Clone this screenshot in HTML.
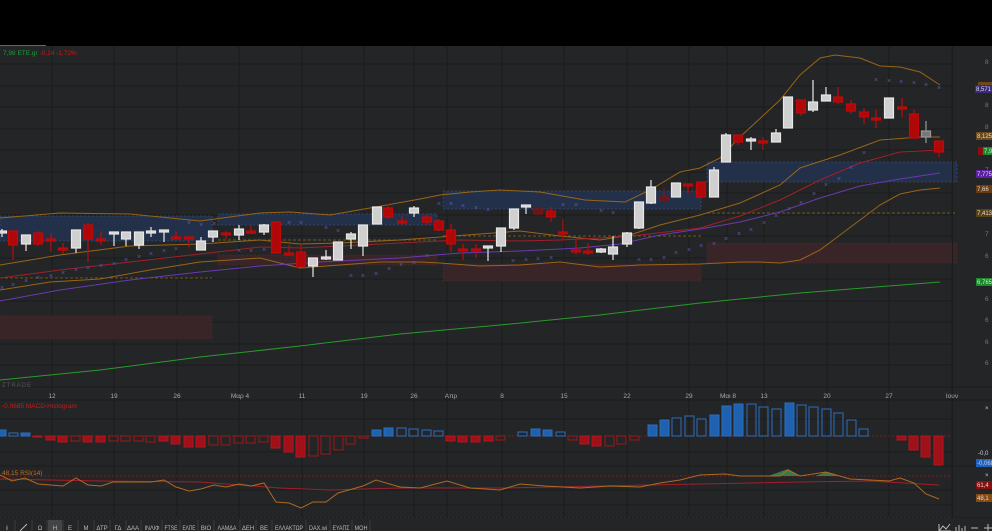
<!DOCTYPE html>
<html><head><meta charset="utf-8"><style>
html,body{margin:0;padding:0;background:#000;width:992px;height:531px;overflow:hidden;font-family:"Liberation Sans","Noto Sans CJK SC",sans-serif}
svg{display:block}
</style></head><body>
<svg width="992" height="531" viewBox="0 0 992 531" xmlns="http://www.w3.org/2000/svg" font-family="Liberation Sans, sans-serif">
<rect x="0" y="0" width="992" height="46" fill="#000"/>
<rect x="0" y="45" width="46" height="1" fill="#666"/>
<rect x="0" y="46" width="992" height="485" fill="#232526"/>
<!-- grid -->
<g stroke="#1a1c1d" stroke-width="1">
<path d="M52 46V518M114 46V518M177 46V518M239 46V518M302 46V518M364 46V518M414 46V518M447 46V518M502 46V518M564 46V518M627 46V518M689 46V518M727 46V518M764 46V518M827 46V518M889 46V518M952 46V518"/>
<path d="M0 64H952M0 86H952M0 107H952M0 129H952M0 150H952M0 172H952M0 193H952M0 215H952M0 236H952M0 258H952M0 279H952M0 301H952M0 322H952M0 344H952M0 365H952M0 387H992M0 400H992M0 419H952M0 452H952M0 466H992M0 490H952M0 505H952M0 518H992"/>
</g>
<text x="3" y="55" font-size="6.5" fill="#1f9a3a">7,98 ETE.gr <tspan fill="#d01818">-0,14 -1,72%</tspan></text>
<!-- zones -->
<g stroke-dasharray="2,2" stroke-width="0.8">
<rect x="0" y="216" width="212" height="25" fill="#23304a" stroke="#3a4a6a"/>
<rect x="218" y="214" width="219" height="11" fill="#23304a" stroke="#3a4a6a"/>
<rect x="443" y="191" width="258" height="18" fill="#23304a" stroke="#3a4a6a"/>
<rect x="707" y="162" width="250" height="20" fill="#23304a" stroke="#3a4a6a"/>
<rect x="0" y="316" width="212" height="23" fill="#392527" stroke="#4a2a2a"/>
<rect x="218" y="255" width="219" height="10" fill="#392527" stroke="#4a2a2a"/>
<rect x="443" y="264" width="258" height="17" fill="#392527" stroke="#4a2a2a"/>
<rect x="707" y="243" width="250" height="20" fill="#392527" stroke="#4a2a2a"/>
</g>
<g stroke="#8a6a1a" stroke-dasharray="3,2" stroke-width="0.8">
<path d="M0 278H212M218 240H437M443 236H701M707 213H957"/>
</g>
<!-- lines -->
<g fill="none" stroke-width="1">
<polyline stroke="#9a6418" points="0,218 60,213 130,214 200,221 230,217 260,213 290,212 330,215 370,208 420,199 440,195 470,192 500,190 540,192 585,200 625,202 650,190 680,172 700,168 720,158 740,137 780,100 800,75 820,58 835,55 860,58 880,66 900,67 920,72 940,85"/>
<polyline stroke="#9a6418" points="0,290 50,282 100,279 150,270 200,262 230,260 260,258 300,268 340,265 380,262 420,262 440,263 480,266 520,265 560,262 600,267 640,265 700,264 740,262 760,262 780,263 800,260 820,250 840,235 860,220 880,205 900,194 920,190 940,188"/>
<polyline stroke="#9a6418" points="0,265 60,255 130,246 200,244 260,240 300,244 340,243 400,240 440,237 480,234 520,231 560,236 600,240 630,235 660,225 700,215 740,203 780,185 800,168 840,155 880,140 920,137 940,137"/>
<polyline stroke="#a0202a" points="0,278 60,270 130,262 200,254 260,247 300,248 360,245 420,242 460,240 520,241 560,240 600,238 640,235 700,228 740,216 780,200 820,180 860,163 900,152 940,150"/>
<polyline stroke="#6a3ab0" points="0,301 60,290 130,280 200,272 260,266 320,262 400,258 460,253 520,251 580,248 620,244 660,235 700,229 740,222 780,212 820,198 860,186 900,179 940,173"/>
<polyline stroke="#2a9a2a" points="0,380 100,370 200,357 300,346 400,334 500,325 600,315 700,303 800,293 940,282"/>
</g>
<!-- SAR -->
<g font-size="7" fill="#5a5ab0" text-anchor="middle">
<text x="2" y="290">×</text><text x="13" y="287">×</text><text x="26" y="283">×</text><text x="38" y="280">×</text><text x="51" y="278">×</text><text x="63" y="275">×</text><text x="76" y="272">×</text><text x="88" y="270">×</text><text x="101" y="268">×</text><text x="114" y="266">×</text><text x="126" y="262">×</text><text x="139" y="259">×</text><text x="151" y="256">×</text><text x="164" y="253">×</text><text x="176" y="251">×</text><text x="189" y="225">×</text><text x="201" y="227">×</text><text x="214" y="226">×</text><text x="239" y="253">×</text><text x="251" y="253">×</text><text x="264" y="252">×</text><text x="276" y="225">×</text><text x="289" y="225">×</text><text x="301" y="225">×</text><text x="326" y="230">×</text><text x="338" y="233">×</text><text x="351" y="278">×</text><text x="363" y="278">×</text><text x="376" y="276">×</text><text x="389" y="271">×</text><text x="401" y="267">×</text><text x="414" y="265">×</text><text x="427" y="258">×</text><text x="439" y="206">×</text><text x="451" y="206">×</text><text x="463" y="208">×</text><text x="476" y="210">×</text><text x="488" y="212">×</text><text x="513" y="263">×</text><text x="526" y="262">×</text><text x="538" y="261">×</text><text x="551" y="260">×</text><text x="563" y="207">×</text><text x="576" y="207">×</text><text x="601" y="213">×</text><text x="613" y="215">×</text><text x="639" y="262">×</text><text x="651" y="262">×</text><text x="664" y="260">×</text><text x="676" y="255">×</text><text x="689" y="252">×</text><text x="701" y="248">×</text><text x="714" y="246">×</text><text x="726" y="241">×</text><text x="739" y="236">×</text><text x="751" y="232">×</text><text x="764" y="225">×</text><text x="776" y="218">×</text><text x="789" y="211">×</text><text x="801" y="205">×</text><text x="814" y="196">×</text><text x="826" y="187">×</text><text x="839" y="181">×</text><text x="851" y="170">×</text><text x="864" y="155">×</text><text x="876" y="82">×</text><text x="889" y="83">×</text><text x="901" y="84">×</text><text x="914" y="85">×</text><text x="926" y="87">×</text><text x="939" y="90">×</text>
</g>
<!-- red candles -->
<g fill="#b00808" stroke="#c00a0a" stroke-width="1.2">
<path fill="none" d="M13 231V260M38 231V246M51 233V252M63 243V254M88 223V262M101 231V245M176 231V239M189 236V247M226 231V239M251 225V234M276 222V253M289 245V256M301 243V267M388 204V219M402 216V225M427 215V225M439 219V231M451 224V252M463 244V260M476 244V258M551 207V222M563 219V241M576 240V254M588 243V255M688 184V193M701 182V197M738 135V145M763 137V150M801 100V116M838 87V104M851 100V114M864 108V124M876 110V128M902 98V117M914 110V138M939 141V157"/>
<rect x="8.5" y="231" width="9" height="14"/><rect x="33.5" y="233" width="9" height="11"/><rect x="46.5" y="239" width="9" height="2"/><rect x="58.5" y="248" width="9" height="2"/><rect x="83.5" y="225" width="9" height="14"/><rect x="96.5" y="239" width="9" height="2"/><rect x="171.5" y="237" width="9" height="2"/><rect x="184.5" y="237" width="9" height="2"/><rect x="221.5" y="233" width="9" height="2"/><rect x="246.5" y="231" width="9" height="2"/><rect x="271.5" y="222" width="9" height="31"/><rect x="284.5" y="253" width="9" height="2"/><rect x="296.5" y="252" width="9" height="15"/><rect x="383.5" y="208" width="9" height="9"/><rect x="397.5" y="221" width="9" height="2"/><rect x="422.5" y="217" width="9" height="5"/><rect x="434.5" y="221" width="9" height="9"/><rect x="446.5" y="230" width="9" height="14"/><rect x="458.5" y="249" width="9" height="2"/><rect x="471.5" y="249" width="9" height="2"/><rect x="546.5" y="211" width="9" height="6"/><rect x="558.5" y="232" width="9" height="2"/><rect x="571.5" y="250" width="9" height="2"/><rect x="583.5" y="251" width="9" height="2"/><rect x="683.5" y="184" width="9" height="2"/><rect x="696.5" y="182" width="9" height="15"/><rect x="733.5" y="135" width="9" height="7"/><rect x="758.5" y="141" width="9" height="2"/><rect x="796.5" y="100" width="9" height="13"/><rect x="833.5" y="97" width="9" height="5"/><rect x="846.5" y="104" width="9" height="7"/><rect x="859.5" y="112" width="9" height="5"/><rect x="871.5" y="118" width="9" height="2"/><rect x="897.5" y="107" width="9" height="2"/><rect x="909.5" y="114" width="9" height="24"/><rect x="934.5" y="141" width="9" height="11"/>
</g>
<g fill="#6a1414" stroke="#7a1616" stroke-width="1.2">
<path fill="none" d="M538 205V214M664 188V201"/>
<rect x="533.5" y="209" width="9" height="5"/><rect x="659.5" y="197" width="9" height="3"/>
</g>
<!-- white candles -->
<g fill="#cfcfcf" stroke="#e8e8e8" stroke-width="1.2">
<path fill="none" d="M2 229V237M26 235V251M76 230V253M114 232V246M126 232V246M139 232V249M151 227V237M164 230V242M201 237V250M213 231V242M239 225V240M264 224V235M313 258V277M326 250V260M338 242V260M351 232V249M363 225V256M377 207V224M414 206V217M488 246V261M501 228V252M514 209V230M526 205V214M601 248V253M613 236V260M627 232V247M639 202V229M651 180V204M676 183V197M714 167V197M726 133V162M751 137V150M776 129V142M788 97V128M813 80V112M826 87V101M889 98V118"/>
<rect x="-2.5" y="231" width="9" height="2"/><rect x="21.5" y="235" width="9" height="9"/><rect x="71.5" y="230" width="9" height="18"/><rect x="109.5" y="232" width="9" height="2"/><rect x="121.5" y="232" width="9" height="7"/><rect x="134.5" y="232" width="9" height="13"/><rect x="146.5" y="231" width="9" height="2"/><rect x="159.5" y="230" width="9" height="2"/><rect x="196.5" y="241" width="9" height="9"/><rect x="208.5" y="231" width="9" height="6"/><rect x="234.5" y="229" width="9" height="6"/><rect x="259.5" y="225" width="9" height="7"/><rect x="308.5" y="258" width="9" height="8"/><rect x="321.5" y="257" width="9" height="2"/><rect x="333.5" y="242" width="9" height="18"/><rect x="346.5" y="234" width="9" height="5"/><rect x="358.5" y="225" width="9" height="21"/><rect x="372.5" y="207" width="9" height="17"/><rect x="409.5" y="208" width="9" height="5"/><rect x="483.5" y="246" width="9" height="2"/><rect x="496.5" y="228" width="9" height="18"/><rect x="509.5" y="209" width="9" height="19"/><rect x="521.5" y="205" width="9" height="2"/><rect x="596.5" y="249" width="9" height="3"/><rect x="608.5" y="247" width="9" height="7"/><rect x="622.5" y="233" width="9" height="11"/><rect x="634.5" y="202" width="9" height="26"/><rect x="646.5" y="187" width="9" height="16"/><rect x="671.5" y="183" width="9" height="14"/><rect x="709.5" y="170" width="9" height="27"/><rect x="721.5" y="135" width="9" height="27"/><rect x="746.5" y="139" width="9" height="2"/><rect x="771.5" y="133" width="9" height="9"/><rect x="783.5" y="97" width="9" height="31"/><rect x="808.5" y="102" width="9" height="8"/><rect x="821.5" y="95" width="9" height="6"/><rect x="884.5" y="98" width="9" height="20"/>
</g>
<g fill="#777" stroke="#999" stroke-width="1.2"><path fill="none" d="M926 121V143"/><rect x="921.5" y="131" width="9" height="6"/></g>
<!-- right axis -->
<rect x="952" y="46" width="1" height="472" fill="#1a1c1d"/>
<g font-size="6.5" fill="#777">
<text x="985" y="64">8</text><text x="985" y="107">8</text><text x="985" y="129">8</text><text x="985" y="172">7</text><text x="985" y="236">7</text><text x="985" y="258">6</text><text x="985" y="301">6</text><text x="985" y="322">6</text><text x="985" y="344">6</text><text x="985" y="365">6</text>
</g>
<g font-size="6" fill="#ddd">
<rect x="978" y="82" width="14" height="8" fill="#6a4a1a"/>
<rect x="975" y="85" width="17" height="8" fill="#3a2a7a"/><text x="976" y="91">8,571</text>
<rect x="976" y="132" width="16" height="8" fill="#6a4a1a"/><text x="977" y="138">8,125</text>
<rect x="978" y="147" width="14" height="8" fill="#8a1010"/>
<rect x="983" y="147" width="9" height="8" fill="#1a8a2a"/><text x="984" y="153">7,98</text>
<rect x="976" y="170" width="16" height="8" fill="#5a20a0"/><text x="977" y="176">7,775</text>
<rect x="976" y="185" width="16" height="8" fill="#6a3a10"/><text x="977" y="191">7,66</text>
<rect x="976" y="209" width="16" height="8" fill="#5a4014"/><text x="977" y="215">7,413</text>
<rect x="976" y="278" width="16" height="8" fill="#1a8a2a"/><text x="977" y="284">6,765</text>
</g>
<!-- watermark/date row -->
<text x="2" y="387" font-size="6" fill="#555" letter-spacing="1">ZTRADE</text>
<g font-size="6.5" fill="#aaa" text-anchor="middle">
<text x="52" y="398">12</text><text x="114" y="398">19</text><text x="177" y="398">26</text><text x="240" y="398">Μαρ 4</text><text x="302" y="398">11</text><text x="364" y="398">19</text><text x="414" y="398">26</text><text x="451" y="398">Απρ</text><text x="502" y="398">8</text><text x="564" y="398">15</text><text x="627" y="398">22</text><text x="689" y="398">29</text><text x="728" y="398">Μαι 8</text><text x="764" y="398">13</text><text x="827" y="398">20</text><text x="889" y="398">27</text><text x="952" y="398">Ιουν</text>
</g>
<!-- MACD -->
<text x="2" y="408" font-size="6.5" fill="#d01818">-0,0685 MACD-Histogram</text>
<path d="M0 436H952" stroke="#a01818" stroke-dasharray="2,2" stroke-width="0.8"/>
<g fill="#2060b0" stroke="#2a70c0" stroke-width="1">
<rect x="-3" y="430" width="9" height="6"/><rect x="21" y="433" width="9" height="3"/><rect x="372" y="430" width="9" height="6"/><rect x="384" y="428" width="9" height="8"/><rect x="531" y="429" width="9" height="7"/><rect x="543" y="430" width="9" height="6"/><rect x="648" y="425" width="9" height="11"/><rect x="660" y="420" width="9" height="16"/><rect x="710" y="415" width="9" height="21"/><rect x="722" y="406" width="9" height="30"/><rect x="734" y="404" width="9" height="32"/><rect x="785" y="403" width="9" height="33"/>
</g>
<g fill="none" stroke="#2a70c0" stroke-width="1">
<rect x="9" y="433" width="9" height="3"/><rect x="397" y="428" width="9" height="8"/><rect x="409" y="429" width="9" height="7"/><rect x="422" y="430" width="9" height="6"/><rect x="434" y="431" width="9" height="5"/><rect x="518" y="432" width="9" height="4"/><rect x="556" y="432" width="9" height="4"/><rect x="672" y="418" width="9" height="18"/><rect x="685" y="416" width="9" height="20"/><rect x="697" y="419" width="9" height="17"/><rect x="747" y="404" width="9" height="32"/><rect x="759" y="407" width="9" height="29"/><rect x="772" y="409" width="9" height="27"/><rect x="797" y="405" width="9" height="31"/><rect x="809" y="407" width="9" height="29"/><rect x="822" y="409" width="9" height="27"/><rect x="834" y="413" width="9" height="23"/><rect x="847" y="420" width="9" height="16"/><rect x="859" y="429" width="9" height="7"/>
</g>
<g fill="#a01018" stroke="#b01820" stroke-width="1">
<rect x="33" y="436" width="9" height="1"/><rect x="46" y="436" width="9" height="4"/><rect x="58" y="436" width="9" height="6"/><rect x="83" y="436" width="9" height="6"/><rect x="96" y="436" width="9" height="6"/><rect x="159" y="436" width="9" height="5"/><rect x="171" y="436" width="9" height="8"/><rect x="184" y="436" width="9" height="11"/><rect x="196" y="436" width="9" height="11"/><rect x="271" y="436" width="9" height="12"/><rect x="284" y="436" width="9" height="16"/><rect x="296" y="436" width="9" height="21"/><rect x="446" y="436" width="9" height="5"/><rect x="458" y="436" width="9" height="6"/><rect x="471" y="436" width="9" height="6"/><rect x="484" y="436" width="9" height="5"/><rect x="580" y="436" width="9" height="8"/><rect x="592" y="436" width="9" height="10"/><rect x="897" y="436" width="9" height="4"/><rect x="909" y="436" width="9" height="14"/><rect x="921" y="436" width="9" height="21"/><rect x="934" y="436" width="9" height="29"/>
</g>
<g fill="none" stroke="#a01818" stroke-width="1">
<rect x="71" y="436" width="9" height="5"/><rect x="109" y="436" width="9" height="5"/><rect x="121" y="436" width="9" height="5"/><rect x="134" y="436" width="9" height="5"/><rect x="146" y="436" width="9" height="6"/><rect x="209" y="436" width="9" height="9"/><rect x="221" y="436" width="9" height="9"/><rect x="234" y="436" width="9" height="7"/><rect x="246" y="436" width="9" height="7"/><rect x="259" y="436" width="9" height="6"/><rect x="309" y="436" width="9" height="20"/><rect x="321" y="436" width="9" height="18"/><rect x="334" y="436" width="9" height="14"/><rect x="346" y="436" width="9" height="8"/><rect x="359" y="436" width="9" height="2"/><rect x="496" y="436" width="9" height="4"/><rect x="568" y="436" width="9" height="4"/><rect x="605" y="436" width="9" height="10"/><rect x="617" y="436" width="9" height="8"/><rect x="630" y="436" width="9" height="4"/>
</g>
<g font-size="6" fill="#ccc"><text x="978" y="455">-0,0</text><rect x="976" y="459" width="16" height="8" fill="#2060c0"/><text x="977" y="465">-0,068</text><text x="985" y="410">×</text><text x="985" y="477">×</text></g>
<!-- RSI -->
<text x="2" y="475" font-size="6.5" fill="#c07020">48,15 RSI(14)</text>
<path d="M0 476H952M0 518H952" stroke="#a01818" stroke-dasharray="2,2" stroke-width="0.8"/>
<path d="M768 476L788 469L800 476ZM815 476L826 472L838 476Z" fill="#3a7a4a"/>
<polyline fill="none" stroke="#a0202a" stroke-width="1" points="0,479 100,481 200,482 280,488 330,490 400,488 500,488 600,486 700,484 800,482 870,481 939,485"/>
<polyline fill="none" stroke="#b06a20" stroke-width="1" points="0,475 12,481 25,478 38,484 63,486 76,478 88,485 101,486 113,482 151,482 164,480 176,487 189,491 201,489 214,485 226,487 239,484 251,486 264,483 276,502 289,503 301,508 313,502 326,502 338,493 363,486 376,480 400,487 420,488 447,481 470,488 500,490 520,484 545,486 580,488 610,486 640,487 660,483 680,480 700,475 725,474 740,476 760,476 780,476 788,470 800,476 826,472 850,479 870,480 889,481 900,478 914,483 926,494 939,499"/>
<g font-size="6" fill="#ddd"><rect x="976" y="481" width="16" height="8" fill="#8a1010"/><text x="977" y="487">61,4</text><rect x="976" y="494" width="16" height="8" fill="#8a4a10"/><text x="977" y="500">48,1</text></g>
<!-- toolbar -->
<rect x="0" y="518" width="992" height="13" fill="#232526"/>
<rect x="48" y="520" width="14" height="11" fill="#444"/>
<g stroke="#3a3c3d"><path d="M15 520V531M32 520V531M47 520V531M63 520V531M78 520V531M94 520V531M110 520V531M126 520V531M141 520V531M162 520V531M180 520V531M198 520V531M214 520V531M240 520V531M256 520V531M272 520V531M306 520V531M330 520V531M352 520V531M370 520V531"/></g>
<path d="M20 531L27 524" stroke="#bbb" stroke-width="1"/>
<g font-size="6" fill="#bbb" text-anchor="middle">
<text x="7" y="530" font-weight="bold">i</text><text x="40" y="530">Ω</text><text x="55" y="530">H</text><text x="70" y="530">E</text><text x="86" y="530">M</text><text x="102" y="530">ΔΤΡ</text><text x="118" y="530">ΓΔ</text><text x="133" y="530">ΔΑΑ</text><text x="152" y="530" textLength="15" lengthAdjust="spacingAndGlyphs">ΙΝΛΙΦ</text><text x="171" y="530" textLength="13" lengthAdjust="spacingAndGlyphs">FTSE</text><text x="189" y="530" textLength="13" lengthAdjust="spacingAndGlyphs">ΕΛΠΕ</text><text x="206" y="530">ΒΙΟ</text><text x="227" y="530" textLength="19" lengthAdjust="spacingAndGlyphs">ΛΑΜΔΑ</text><text x="248" y="530">ΔΕΗ</text><text x="264" y="530">ΒΕ</text><text x="289" y="530" textLength="28" lengthAdjust="spacingAndGlyphs">ΕΛΛΑΚΤΩΡ</text><text x="318" y="530" textLength="18" lengthAdjust="spacingAndGlyphs">DAX.wi</text><text x="341" y="530" textLength="17" lengthAdjust="spacingAndGlyphs">ΕΥΑΠΣ</text><text x="361" y="530" textLength="13" lengthAdjust="spacingAndGlyphs">ΜΟΗ</text>
</g>
<g stroke="#bbb" fill="none" stroke-width="1"><path d="M939 531L943 526L946 529L950 524M939 524V531H951"/><path d="M956 531V527M959 531V525M962 531V528M965 531V526"/><path d="M971 528H978"/><path d="M984 528H992M988 524V531"/></g>
</svg>
</body></html>
